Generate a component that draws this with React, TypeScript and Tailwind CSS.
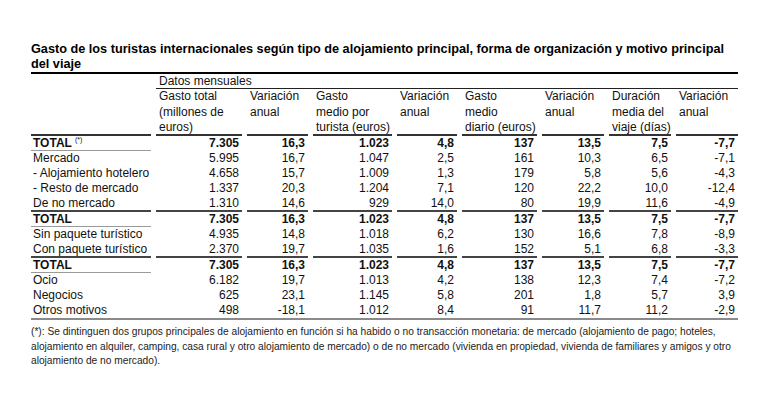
const grid =
  "grid grid-cols-[120px_86px_61px_79px_60px_75px_62px_62px_62px] gap-x-[5px]";

type Row = {
  label: string;
  values: string[];
  total?: boolean;
  sup?: boolean;
  line?: "seg" | "full";
};

const totals = ["7.305", "16,3", "1.023", "4,8", "137", "13,5", "7,5", "-7,7"];

const rows: Row[] = [
  { label: "TOTAL", values: totals, total: true, sup: true },
  { label: "Mercado", values: ["5.995", "16,7", "1.047", "2,5", "161", "10,3", "6,5", "-7,1"] },
  { label: "- Alojamiento hotelero", values: ["4.658", "15,7", "1.009", "1,3", "179", "5,8", "5,6", "-4,3"] },
  { label: "- Resto de mercado", values: ["1.337", "20,3", "1.204", "7,1", "120", "22,2", "10,0", "-12,4"] },
  { label: "De no mercado", values: ["1.310", "14,6", "929", "14,0", "80", "19,9", "11,6", "-4,9"], line: "seg" },
  { label: "TOTAL", values: totals, total: true },
  { label: "Sin paquete turístico", values: ["4.935", "14,8", "1.018", "6,2", "130", "16,6", "7,8", "-8,9"] },
  { label: "Con paquete turístico", values: ["2.370", "19,7", "1.035", "1,6", "152", "5,1", "6,8", "-3,3"], line: "seg" },
  { label: "TOTAL", values: totals, total: true },
  { label: "Ocio", values: ["6.182", "19,7", "1.013", "4,2", "138", "12,3", "7,4", "-7,2"] },
  { label: "Negocios", values: ["625", "23,1", "1.145", "5,8", "201", "1,8", "5,7", "3,9"] },
  { label: "Otros motivos", values: ["498", "-18,1", "1.012", "8,4", "91", "11,7", "11,2", "-2,9"], line: "full" },
];

const headers = [
  ["Gasto total", "(millones de", "euros)"],
  ["Variación", "anual"],
  ["Gasto", "medio por", "turista (euros)"],
  ["Variación", "anual"],
  ["Gasto", "medio", "diario (euros)"],
  ["Variación", "anual"],
  ["Duración", "media del", "viaje (días)"],
  ["Variación", "anual"],
];

function DataRow({ row }: { row: Row }) {
  const seg = row.line === "seg";
  const full = row.line === "full";
  return (
    <div
      className={`${grid} ${row.total ? "font-bold" : ""} ${
        full ? "border-b-2 border-[#8a8a8a]" : ""
      }`}
    >
      <div
        className={`pl-[2px] whitespace-nowrap ${
          seg
            ? "h-[16px] border-b-2 border-[#444]"
            : row.total
              ? "h-[15px] border-b border-[#9a9a9a]"
              : "h-[15px]"
        }`}
      >
        {row.label}
        {row.sup && (
          <span className="relative -top-[5px] ml-[3px] text-[7px] font-normal">(*)</span>
        )}
      </div>
      {row.values.map((v, i) => (
        <div
          key={i}
          className={`pr-[3px] text-right ${
            seg ? "h-[16px] border-b-2 border-[#444]" : "h-[15px]"
          }`}
        >
          {v}
        </div>
      ))}
    </div>
  );
}

export default function App() {
  return (
    <div className="h-[401px] w-[770px] bg-white pt-[42px] pl-[31px] font-['Liberation_Sans',Arial,sans-serif] text-[12px] leading-[15px] text-[#111]">
      <h1 className="text-[12.7px] leading-[15px] font-bold whitespace-nowrap text-black">
        Gasto de los turistas internacionales según tipo de alojamiento principal, forma de
        organización y motivo principal
        <br />
        del viaje
      </h1>

      <div className="w-[707px]">
        <div className="border-t-2 border-black" />

        <div className={grid}>
          <div className="h-[15px]" />
          <div className="col-span-8 h-[15px] border-b border-[#222] pl-[3px]">
            Datos mensuales
          </div>
        </div>

        <div className={grid}>
          <div className="h-[47px] border-b-2 border-[#333]" />
          {headers.map((h, i) => (
            <div
              key={i}
              className="h-[47px] border-b-2 border-[#333] pl-[3px] leading-[15.5px] whitespace-nowrap"
            >
              {h.map((t, j) => (
                <div key={j}>{t}</div>
              ))}
            </div>
          ))}
        </div>

        {rows.map((r, i) => (
          <DataRow key={i} row={r} />
        ))}
      </div>

      <p className="mt-[5px] text-[10.2px] leading-[14.5px] whitespace-nowrap text-[#222]">
        (*): Se dintinguen dos grupos principales de alojamiento en función si ha habido o no
        transacción monetaria: de mercado (alojamiento de pago; hoteles,
        <br />
        alojamiento en alquiler, camping, casa rural y otro alojamiento de mercado) o de no
        mercado (vivienda en propiedad, vivienda de familiares y amigos y otro
        <br />
        alojamiento de no mercado).
      </p>
    </div>
  );
}
